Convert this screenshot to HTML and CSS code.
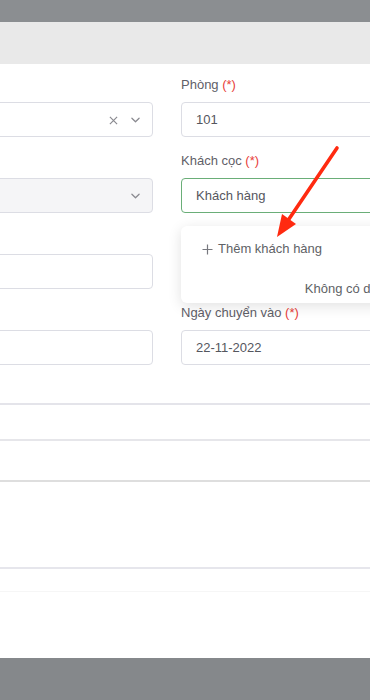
FILE: index.html
```html
<!DOCTYPE html>
<html lang="vi">
<head>
<meta charset="utf-8">
<link rel="stylesheet" href="styles.css">
</head>
<body>
  <div class="backdrop backdrop-top"></div>
  <div class="modal">
    <div class="modal-head"></div>
    <div class="modal-body">
      <div class="form-grid">
        <div class="field">
          <div class="label">&nbsp;</div>
          <div class="control">
            <span class="ctrl-text"></span>
            <span class="icons">
              <svg class="ic-x" viewBox="0 0 10 10" width="9" height="9"><path d="M1 1L9 9M9 1L1 9" stroke="#8a8a90" stroke-width="1.3" fill="none"/></svg>
              <svg class="ic-chev" viewBox="0 0 10 6" width="9" height="6"><path d="M1 1L5 5L9 1" stroke="#8a8a90" stroke-width="1.4" fill="none" stroke-linecap="round" stroke-linejoin="round"/></svg>
            </span>
          </div>
        </div>
        <div class="field">
          <div class="label">Phòng <span class="req">(*)</span></div>
          <div class="control"><span class="ctrl-text">101</span></div>
        </div>

        <div class="field">
          <div class="label">&nbsp;</div>
          <div class="control disabled">
            <span class="ctrl-text"></span>
            <span class="icons">
              <svg class="ic-chev" viewBox="0 0 10 6" width="9" height="6"><path d="M1 1L5 5L9 1" stroke="#8a8a90" stroke-width="1.4" fill="none" stroke-linecap="round" stroke-linejoin="round"/></svg>
            </span>
          </div>
        </div>
        <div class="field field-dd">
          <div class="label">Khách cọc <span class="req">(*)</span></div>
          <div class="control focus"><span class="ctrl-text">Khách hàng</span></div>
          <div class="dropdown">
            <div class="dd-add"><svg class="plus" viewBox="0 0 11 11" width="11" height="11"><path d="M5.5 0.5V10.5M0.5 5.5H10.5" stroke="#77787f" stroke-width="1.2" fill="none"/></svg>Thêm khách hàng</div>
            <div class="dd-empty">Không có dữ liệu</div>
          </div>
        </div>

        <div class="field">
          <div class="label">&nbsp;</div>
          <div class="control"></div>
        </div>
        <div class="field">
          <div class="label">&nbsp;</div>
          <div class="control"></div>
        </div>

        <div class="field">
          <div class="label">&nbsp;</div>
          <div class="control"></div>
        </div>
        <div class="field">
          <div class="label">Ngày chuyển vào <span class="req">(*)</span></div>
          <div class="control"><span class="ctrl-text">22-11-2022</span></div>
        </div>
      </div>

      <div class="table">
        <div class="trow r1"></div>
        <div class="trow r2"></div>
        <div class="trow r3"></div>
        <div class="trow r4"></div>
        <div class="trow r5"></div>
      </div>
    </div>
  </div>
  <div class="backdrop backdrop-bottom"></div>

  <svg class="arrow" width="370" height="700" viewBox="0 0 370 700">
    <line x1="337" y1="148" x2="289" y2="219" stroke="#ff2a10" stroke-width="3.6" stroke-linecap="round"/>
    <polygon points="277,237 282,214 296,224" fill="#ff2a10"/>
  </svg>
</body>
</html>
```

FILE: styles.css
```css
* { box-sizing: border-box; }
html, body {
  margin: 0;
  padding: 0;
  width: 370px;
  height: 700px;
  overflow: hidden;
  font-family: "Liberation Sans", Arial, sans-serif;
  font-size: 13px;
  color: #606266;
  background: #fff;
}
.backdrop { background: #8b8e91; }
.backdrop-top { height: 22px; }
.backdrop-bottom { height: 42px; background: #85888b; }
.modal {
  height: 636px;
  background: #fff;
  display: flex;
  flex-direction: column;
}
.modal-head {
  height: 42px;
  background: #e9e9e9;
}
.modal-body {
  flex: 1;
  padding-top: 12px;
}
.form-grid {
  display: grid;
  grid-template-columns: 180px 220px;
  column-gap: 28px;
  row-gap: 15px;
  margin-left: -27px;
}
.field { position: relative; }
.label {
  line-height: 18px;
  height: 18px;
  margin-bottom: 8px;
  color: #5f6068;
  white-space: nowrap;
}
.req { color: #e8403a; }
.control {
  height: 35px;
  border: 1px solid #dcdde4;
  border-radius: 4px;
  background: #fff;
  display: flex;
  align-items: center;
  padding: 0 14px;
  color: #55565e;
}
.control.disabled { background: #f5f5f7; }
.control.focus { border-color: #6aae78; }
.ctrl-text { flex: 1; white-space: nowrap; }
.icons {
  display: flex;
  align-items: center;
  gap: 13px;
  margin-right: -2px;
}
.ic-x { margin-top: 1px; }
.dropdown {
  position: absolute;
  left: 0;
  top: calc(100% + 13px);
  width: 346px;
  background: #fff;
  border-radius: 6px;
  box-shadow: 0 3px 14px rgba(0, 0, 0, 0.12);
  padding: 14px 0 5px;
  z-index: 2;
}
.dd-add {
  line-height: 18px;
  padding-left: 21px;
  color: #606266;
  white-space: nowrap;
  display: flex;
  align-items: center;
}
.plus {
  margin-right: 5px;
}
.dd-empty {
  margin-top: 22px;
  line-height: 18px;
  text-align: center;
  color: #606266;
  white-space: nowrap;
}
.table { padding-top: 38px; }
.trow { border-top: 2px solid #e4e4ea; }
.r1 { height: 36px; }
.r2 { height: 41px; border-top-color: #e6e6ea; }
.r3 { height: 87px; border-top-color: #dedede; }
.r4 { height: 24px; border-top-color: #e6e6ec; }
.r5 { border-top: 1px solid #f6f6f6; }
.arrow {
  position: absolute;
  left: 0;
  top: 0;
  pointer-events: none;
  z-index: 5;
}
```
